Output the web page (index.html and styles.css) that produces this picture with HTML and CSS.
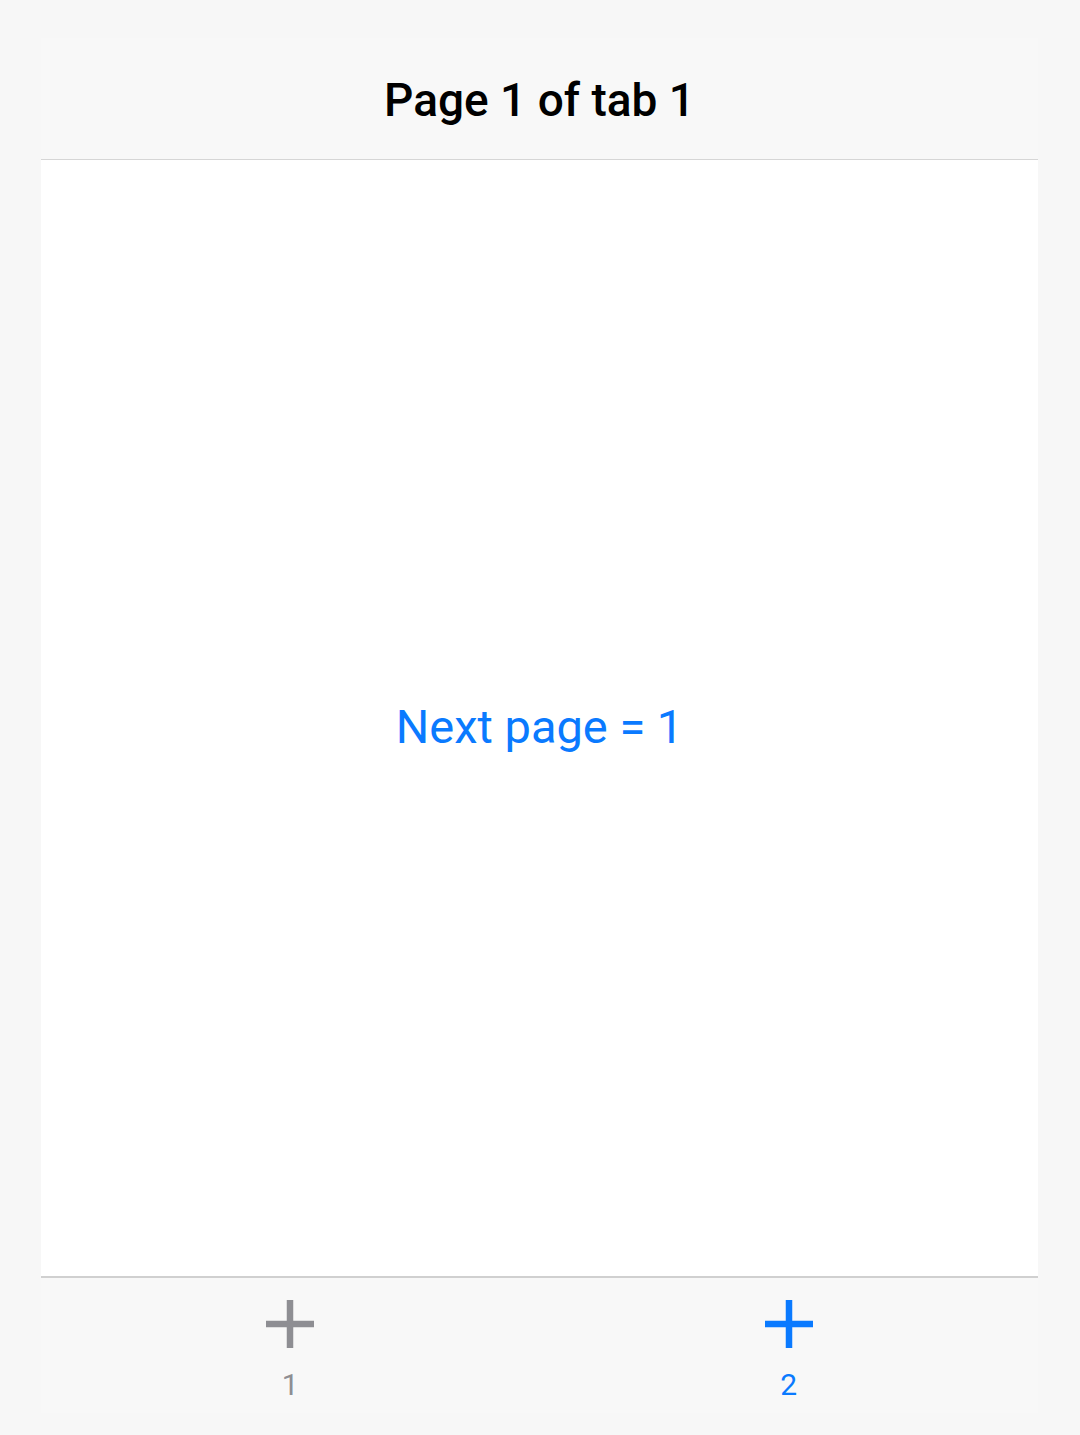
FILE: index.html
```html
<!DOCTYPE html>
<html>
<head>
<meta charset="utf-8">
<link rel="stylesheet" href="styles.css">
</head>
<body>
<div class="frame">
  <header class="navbar">
    <h1 class="title">Page 1 of tab 1</h1>
  </header>
  <main class="content">
    <a class="next-link">Next page = 1</a>
  </main>
  <nav class="tabbar">
    <div class="tab tab-inactive">
      <svg class="tab-icon" viewBox="0 0 50 50" width="50" height="50"><path d="M25 1 V49 M1 25 H49" stroke="currentColor" stroke-width="6.5" fill="none"/></svg>
      <span class="tab-label">1</span>
    </div>
    <div class="tab tab-active">
      <svg class="tab-icon" viewBox="0 0 50 50" width="50" height="50"><path d="M25 1 V49 M1 25 H49" stroke="currentColor" stroke-width="6.5" fill="none"/></svg>
      <span class="tab-label">2</span>
    </div>
  </nav>
</div>
</body>
</html>
```

FILE: styles.css
```css
html, body {
  margin: 0;
  padding: 0;
  background: #f7f7f7;
  font-family: Roboto, "Liberation Sans", sans-serif;
}
body {
  padding: 38px 42px 0 41px;
  height: 1435px;
  box-sizing: border-box;
}
.frame {
  display: flex;
  flex-direction: column;
  width: 997px;
  height: 1375px;
}
.navbar {
  height: 121px;
  background: #f8f8f8;
  border-bottom: 1px solid #d6d6d6;
  display: flex;
  align-items: center;
  justify-content: center;
  flex: none;
}
.title {
  margin: 0;
  font-size: 46px;
  font-weight: 500;
  color: #000;
  padding-top: 2px;
}
.content {
  flex: 1;
  background: #fff;
  display: flex;
  align-items: center;
  justify-content: center;
  padding-top: 16px;
  box-sizing: border-box;
}
.next-link {
  color: #0a7aff;
  font-size: 47px;
  font-weight: 400;
}
.tabbar {
  height: 137px;
  flex: none;
  border-top: 2px solid #d0d0d0;
  background: #f8f8f8;
  display: flex;
  box-sizing: border-box;
}
.tab {
  flex: 1;
  display: flex;
  flex-direction: column;
  align-items: center;
  padding-top: 21px;
}
.tab-inactive { color: #8e8e93; }
.tab-active { color: #0a7aff; }
.tab-icon {
  display: block;
}
.tab-label {
  font-size: 30px;
  line-height: 34px;
  margin-top: 19px;
}
```
